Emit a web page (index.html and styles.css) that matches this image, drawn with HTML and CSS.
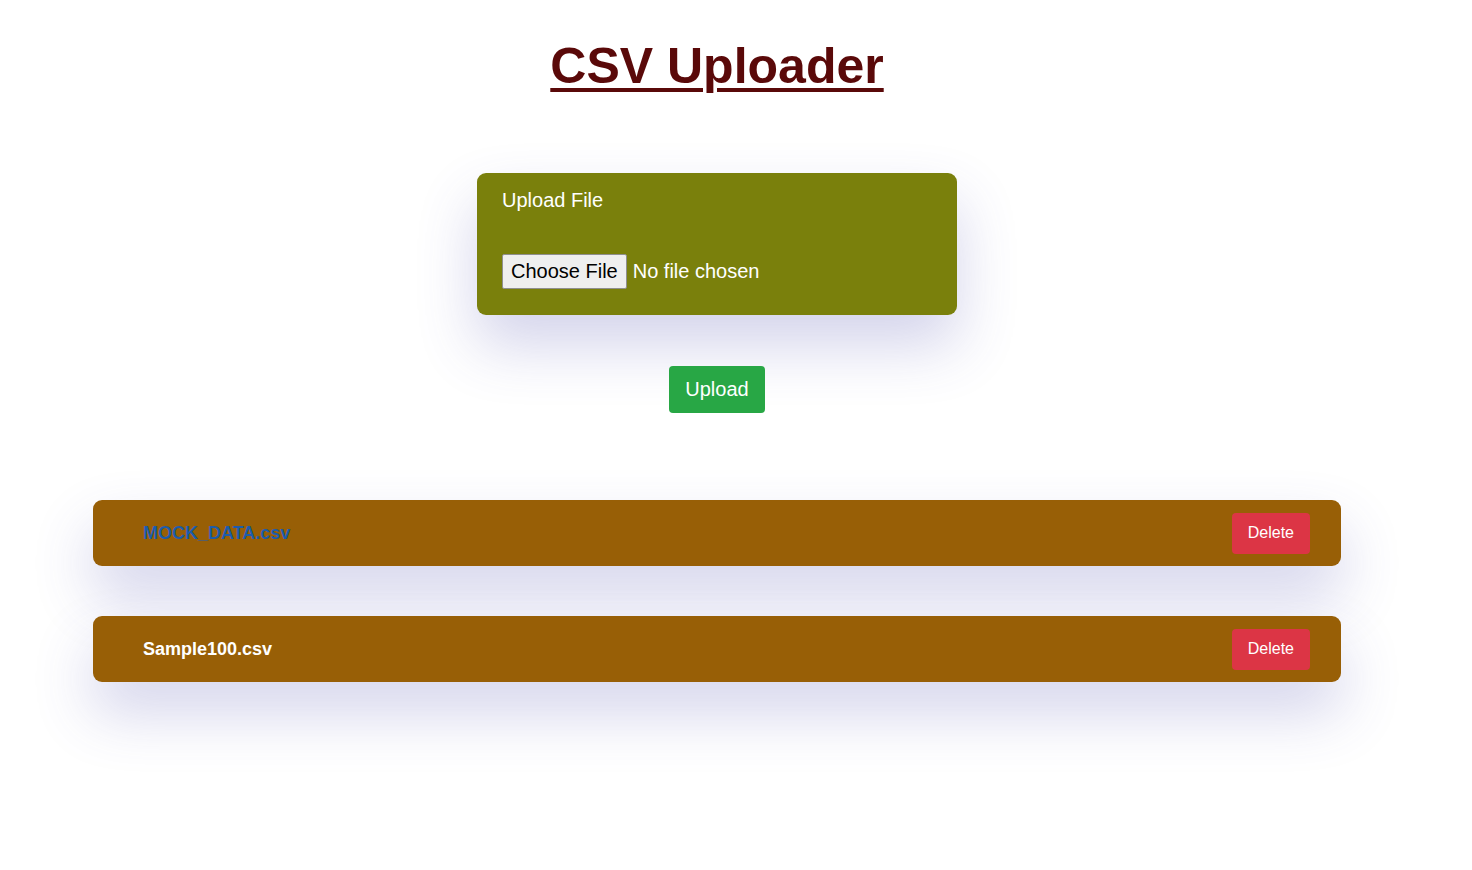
FILE: index.html
```html
<!DOCTYPE html>
<html lang="en">
<head>
<meta charset="utf-8">
<title>CSV Uploader</title>
<link rel="stylesheet" href="styles.css">
</head>
<body>
<main class="page">
  <h1 class="title">CSV Uploader</h1>
  <form class="upload-form">
    <div class="upload-card">
      <div class="upload-label">Upload File</div>
      <div class="file-row">
        <span class="file-btn">Choose File</span>
        <span class="file-name">No file chosen</span>
      </div>
    </div>
    <button type="button" class="upload-btn">Upload</button>
  </form>
  <ul class="file-list">
    <li class="file-item">
      <span class="file-title file-title-active">MOCK_DATA.csv</span>
      <button type="button" class="delete-btn">Delete</button>
    </li>
    <li class="file-item">
      <span class="file-title">Sample100.csv</span>
      <button type="button" class="delete-btn">Delete</button>
    </li>
  </ul>
</main>
</body>
</html>
```

FILE: styles.css
```css
html, body {
  margin: 0;
  padding: 0;
  background: #ffffff;
}

body {
  font-family: "Liberation Sans", Arial, sans-serif;
}

.page {
  width: 1434px;
  padding-bottom: 180px;
  display: flex;
  flex-direction: column;
  align-items: center;
}

.title {
  margin: 38px 0 0;
  font-size: 50px;
  font-weight: bold;
  line-height: 57px;
  color: #5a0909;
  text-decoration: underline;
  text-decoration-thickness: 4px;
  text-underline-offset: 5px;
}

.upload-form {
  margin-top: 78px;
  display: flex;
  flex-direction: column;
  align-items: center;
}

.upload-card {
  width: 480px;
  box-sizing: border-box;
  padding: 16px 25px 26px;
  background: #7a800c;
  border-radius: 9px;
  box-shadow: 0 30px 60px rgba(70, 70, 170, 0.24);
  color: #ffffff;
}

.upload-label {
  font-size: 20px;
  line-height: 23px;
}

.file-row {
  margin-top: 42px;
  display: flex;
  align-items: center;
  gap: 6px;
  font-size: 20px;
}

.file-btn {
  display: inline-block;
  height: 35px;
  box-sizing: border-box;
  padding: 0 8px;
  line-height: 33px;
  background: #efefef;
  border: 1px solid #8f8f8f;
  border-radius: 2px;
  color: #000000;
}

.file-name {
  color: #ffffff;
}

.upload-btn {
  margin-top: 51px;
  padding: 12px 16px;
  font-family: "Liberation Sans", Arial, sans-serif;
  font-size: 20px;
  line-height: 23px;
  color: #ffffff;
  background: #28a745;
  border: none;
  border-radius: 4px;
}

.file-list {
  list-style: none;
  margin: 87px 0 0;
  padding: 0;
  width: 1248px;
  display: flex;
  flex-direction: column;
  gap: 50px;
}

.file-item {
  height: 66px;
  box-sizing: border-box;
  padding: 0 31px 0 50px;
  display: flex;
  align-items: center;
  justify-content: space-between;
  background: #985f06;
  border-radius: 9px;
  box-shadow: 0 30px 60px rgba(70, 70, 170, 0.24);
}

.file-title {
  font-size: 18px;
  line-height: 24px;
  font-weight: bold;
  color: #ffffff;
}

.file-title-active {
  color: #1c5cac;
}

.delete-btn {
  height: 41px;
  padding: 0 16px;
  font-family: "Liberation Sans", Arial, sans-serif;
  font-size: 16px;
  color: #ffffff;
  background: #dc3545;
  border: none;
  border-radius: 4px;
}
```
